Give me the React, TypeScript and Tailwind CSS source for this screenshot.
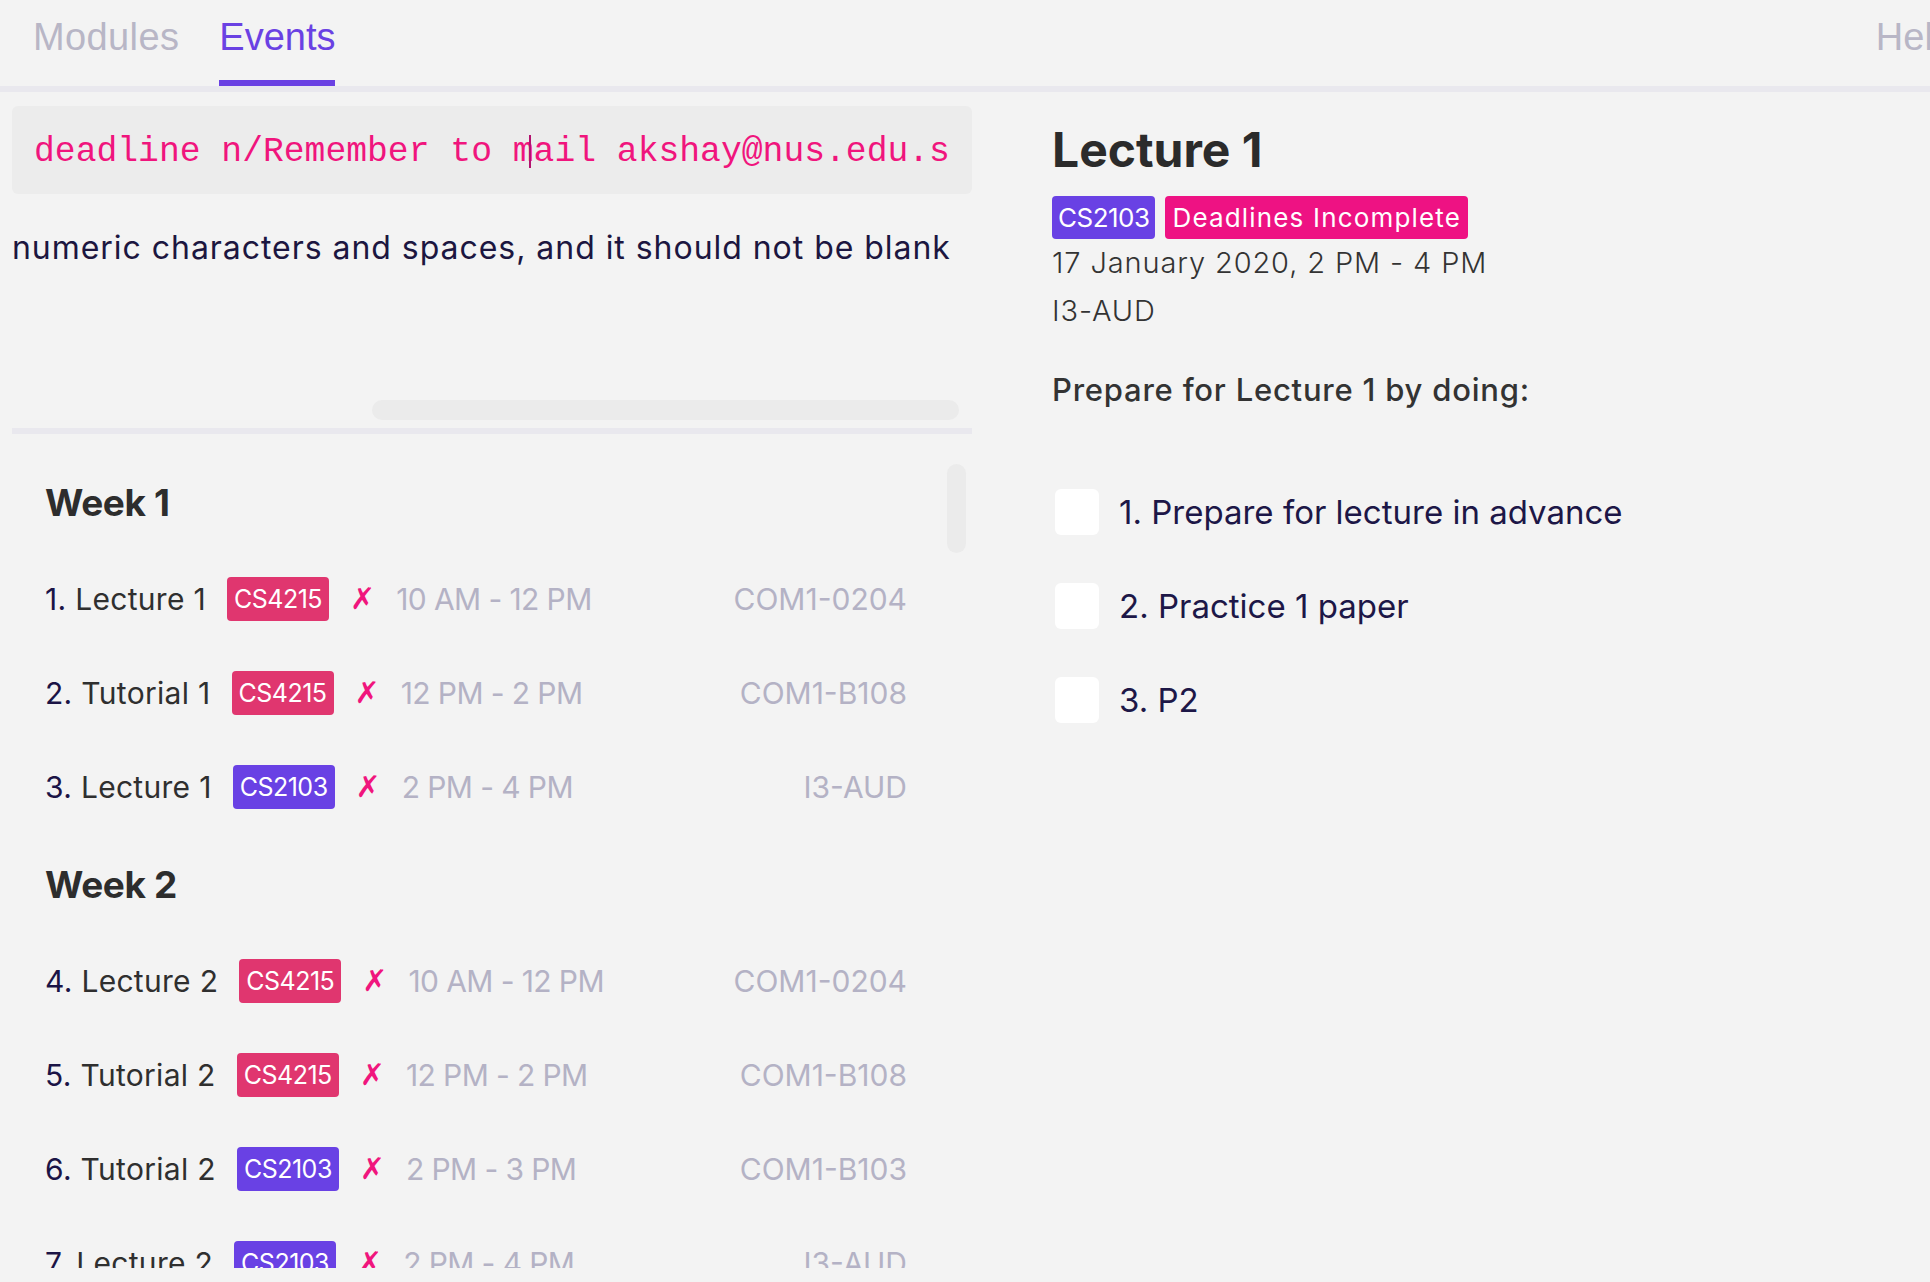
import React from 'react'

type Row = { no: number; name: string; code: string; time: string; venue: string }

const weeks: { title: string; rows: Row[] }[] = [
  {
    title: 'Week 1',
    rows: [
      { no: 1, name: 'Lecture 1', code: 'CS4215', time: '10 AM - 12 PM', venue: 'COM1-0204' },
      { no: 2, name: 'Tutorial 1', code: 'CS4215', time: '12 PM - 2 PM', venue: 'COM1-B108' },
      { no: 3, name: 'Lecture 1', code: 'CS2103', time: '2 PM - 4 PM', venue: 'I3-AUD' },
    ],
  },
  {
    title: 'Week 2',
    rows: [
      { no: 4, name: 'Lecture 2', code: 'CS4215', time: '10 AM - 12 PM', venue: 'COM1-0204' },
      { no: 5, name: 'Tutorial 2', code: 'CS4215', time: '12 PM - 2 PM', venue: 'COM1-B108' },
      { no: 6, name: 'Tutorial 2', code: 'CS2103', time: '2 PM - 3 PM', venue: 'COM1-B103' },
      { no: 7, name: 'Lecture 2', code: 'CS2103', time: '2 PM - 4 PM', venue: 'I3-AUD' },
    ],
  },
]

const tasks = ['Prepare for lecture in advance', 'Practice 1 paper', 'P2']

function Tag({ code }: { code: string }) {
  return (
    <span className={`flex h-[44px] items-center rounded-[4px] px-[7px] text-[25px] leading-none tracking-[-0.02em] text-white ${code === 'CS2103' ? 'bg-[#6941e4]' : 'bg-[#e0366f]'}`}>
      {code}
    </span>
  )
}

function EventRow({ row }: { row: Row }) {
  return (
    <div className="flex h-[94px] items-center gap-[21px] text-[30px] leading-none">
      <span className="whitespace-nowrap tracking-[0.01em] text-[#2f2f2f]">
        <span className="text-[#1b1446]">{row.no}.</span> {row.name}
      </span>
      <Tag code={row.code} />
      <span className="font-['DejaVu_Sans',sans-serif] text-[30px] font-bold text-[#f0157d]">✗</span>
      <span className="whitespace-nowrap tracking-[-0.02em] text-[#b4b2c5]">{row.time}</span>
      <span className="ml-auto whitespace-nowrap text-[#b4b2c5]">{row.venue}</span>
    </div>
  )
}

export default function App() {
  return (
    <div className="h-[1282px] w-[1930px] overflow-hidden bg-[#f3f3f3] font-['Inter',sans-serif]">
      <header className="flex h-[92px] border-b-[6px] border-[#e9e8ee] font-['Liberation_Sans',sans-serif] text-[38px] leading-none">
        <div className="ml-[33px] mt-[18px] tracking-[0.01em] text-[#b8b6c6]">Modules</div>
        <div className="ml-[40px] flex flex-col justify-between">
          <span className="mt-[18px] text-[#6a41e3]">Events</span>
          <span className="h-[6px] bg-[#6a41e3]" />
        </div>
        <div className="ml-auto mr-[-24px] mt-[18px] text-[#b8b6c6]">Help</div>
      </header>

      <main className="flex">
        <section className="ml-[12px] w-[960px]">
          <div className="mt-[14px] flex h-[88px] items-center overflow-hidden rounded-[6px] bg-[#ececec] px-[22px] pt-[5px]">
            <div className="overflow-hidden whitespace-nowrap font-['Liberation_Mono',monospace] text-[34.7px] leading-none text-[#f0157d]">
              deadline n/Remember to <span className="relative">m<span className="absolute right-[3px] top-[-6px] h-[42px] w-[1.5px] bg-[#b3136f]" /></span>ail akshay@nus.edu.sg d/2020-01-17
            </div>
          </div>
          <div className="h-[206px] overflow-hidden">
            <p className="mt-[38px] whitespace-nowrap text-[32px] leading-none tracking-[0.03em] text-[#1c1640]">
              numeric characters and spaces, and it should not be blank
            </p>
          </div>
          <div className="flex h-[20px]">
            <div className="ml-[360px] w-[587px] rounded-full bg-[#ebebeb]" />
          </div>
          <div className="mt-[8px] h-[6px] bg-[#e9e8ee]" />

          <div className="relative h-[834px] overflow-hidden">
            <div className="absolute left-[935px] top-[30px] h-[89px] w-[19px] rounded-full bg-[#ebebeb]" />
            <div className="pl-[33px] pr-[65px] pt-[18px]">
              {weeks.map((w) => (
                <div key={w.title}>
                  <div className="flex h-[100px] items-center text-[37px] font-bold leading-none tracking-[-0.01em] text-[#2d2d2d]">
                    {w.title}
                  </div>
                  {w.rows.map((r) => (
                    <EventRow key={r.no} row={r} />
                  ))}
                </div>
              ))}
            </div>
          </div>
        </section>

        <section className="ml-[80px] flex-1">
          <h1 className="mt-[34px] text-[48px] font-bold leading-none text-[#2b2b2b]">Lecture 1</h1>
          <div className="mt-[22px] flex gap-[10px] text-[26px] leading-none text-white">
            <span className="flex h-[43px] items-center rounded-[4px] bg-[#6941e4] px-[6px] tracking-[-0.02em]">CS2103</span>
            <span className="flex h-[43px] items-center rounded-[4px] bg-[#ee1283] px-[7px] tracking-[0.045em]">Deadlines Incomplete</span>
          </div>
          <div className="text-[29px] font-light leading-[48px] tracking-[0.03em] text-[#333333]">
            <p>17 January 2020, 2 PM - 4 PM</p>
            <p>I3-AUD</p>
          </div>
          <p className="mt-[39px] text-[31px] font-medium leading-none tracking-[0.025em] text-[#333333]">Prepare for Lecture 1 by doing:</p>
          <ul className="mt-[60px]">
            {tasks.map((t, i) => (
              <li key={t} className="flex h-[94px] items-center gap-[20px] text-[33px] leading-none text-[#1d1747]">
                <span className="ml-[3px] h-[46px] w-[44px] rounded-[6px] bg-white" />
                <span>
                  {i + 1}. {t}
                </span>
              </li>
            ))}
          </ul>
        </section>
      </main>
    </div>
  )
}
